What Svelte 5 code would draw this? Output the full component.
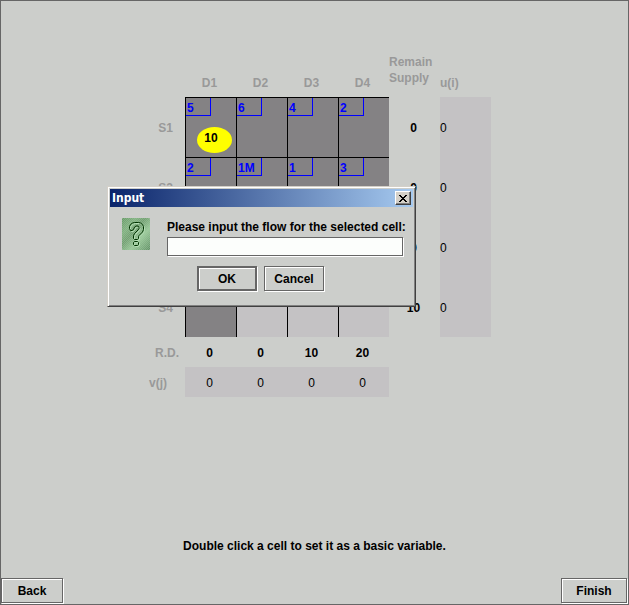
<script>
  const demands = ['D1', 'D2', 'D3', 'D4'];
  const rows = [
    { name: 'S1', costs: ['5', '6', '4', '2'], closed: [true, true, true, true], supply: 0, u: 0, flows: [10] },
    { name: 'S2', costs: ['2', '1M', '1', '3'], closed: [true, true, true, true], supply: 0, u: 0, flows: [] },
    { name: 'S3', costs: ['', '', '', ''], closed: [true, false, false, false], supply: 0, u: 0, flows: [] },
    { name: 'S4', costs: ['', '', '', ''], closed: [true, false, false, false], supply: 10, u: 0, flows: [] }
  ];
  const remaining = [0, 0, 10, 20];
  const v = [0, 0, 0, 0];
  const hook = 'M7.5 10.5v-2l1-2 2-1.500 2-.5h4l2 .5 2 1.500 1 2v3l-1 2.500-3.500 3.500-.5 1v2l-1 1h-3l-1-1v-3l1-2 3.500-3.500 1-1.500v-1l-1-1.500h-2l-1.500 1-1 2.500-1.500 1h-1.500z';
  const dot = 'M12.500 23.500h3l1 1v2l-1 1h-3l-1-1v-2z';
  let flow = $state('');
</script>

<main class="frame">
  <table class="tableau">
    <thead>
      <tr>
        <td class="side"></td>
        {#each demands as d}<th class="col">{d}</th>{/each}
        <th class="col left supply">Remain<br />Supply</th>
        <th class="col left">u(i)</th>
      </tr>
    </thead>
    <tbody>
      {#each rows as row}
        <tr class="source">
          <th class="side">{row.name}</th>
          {#each row.costs as cost, j}
            <td class="cell" class:closed={row.closed[j]}>
              {#if cost}<span class="cost">{cost}</span>{/if}
              {#if row.flows[j]}<span class="flow">{row.flows[j]}</span>{/if}
            </td>
          {/each}
          <td class="bold">{row.supply}</td>
          <td class="pale left">{row.u}</td>
        </tr>
      {/each}
      <tr class="sum">
        <th class="side rd">R.D.</th>
        {#each remaining as r}<td class="bold">{r}</td>{/each}
      </tr>
      <tr class="sum">
        <th class="side vj">v(j)</th>
        {#each v as n}<td class="pale">{n}</td>{/each}
      </tr>
    </tbody>
  </table>

  <p class="hint">Double click a cell to set it as a basic variable.</p>

  <footer>
    <button class="btn back">Back</button>
    <button class="btn finish">Finish</button>
  </footer>

  <dialog open aria-labelledby="dialog-title">
    <header>
      <span id="dialog-title">Input</span>
      <button class="close" aria-label="Close">
        <svg width="8" height="7" viewBox="0 0 8 7" shape-rendering="crispEdges">
          <path d="M0 0h2v1h1v1h2V1h1V0h2v1H7v1H6v1H5v1h1v1h1v1h1v1H6V6H5V5H3v1H2v1H0V6h1V5h1V4h1V3H2V2H1V1H0z" />
        </svg>
      </button>
    </header>
    <div class="body">
      <svg class="icon" width="28" height="32" viewBox="0 0 28 32" aria-hidden="true">
        <defs>
          <linearGradient id="green" x1="0" y1="0" x2="1" y2="1">
            <stop offset="0" stop-color="#669966" />
            <stop offset="0.25" stop-color="#83b383" />
            <stop offset="0.42" stop-color="#729f72" />
            <stop offset="0.65" stop-color="#9ccb9c" />
            <stop offset="1" stop-color="#5f8f64" />
          </linearGradient>
          <pattern id="dither" width="2" height="2" patternUnits="userSpaceOnUse">
            <path d="M0 0h1v1H0zM1 1h1v1H1z" fill="#a6c9a6" opacity="0.4" />
          </pattern>
        </defs>
        <rect width="28" height="32" rx="1" fill="url(#green)" />
        <rect width="28" height="32" rx="1" fill="url(#dither)" />
        <g fill="none" stroke-linejoin="round">
          <g stroke="#b5dfb5" transform="translate(1 1)">
            <path d={hook} />
            <path d={dot} />
          </g>
          <g stroke="#003300">
            <path d={hook} />
            <path d={dot} />
          </g>
        </g>
      </svg>
      <div class="field">
        <label for="flow">Please input the flow for the selected cell:</label>
        <input id="flow" type="text" bind:value={flow} />
      </div>
    </div>
    <div class="actions">
      <button class="btn default">OK</button>
      <button class="btn">Cancel</button>
    </div>
  </dialog>
</main>

<style>
  :global(body) {
    margin: 0;
    background: #cccecb;
  }
  .frame {
    position: relative;
    box-sizing: border-box;
    min-height: 100vh;
    border: 1px solid #666;
    display: flex;
    flex-direction: column;
    background: #cccecb;
    color: #000;
    font: 12px/16px 'Liberation Sans', Arial, sans-serif;
  }
  .tableau {
    align-self: center;
    margin-top: 52px;
    border-collapse: separate;
    border-spacing: 0;
    table-layout: fixed;
    width: 353px;
  }
  th,
  td {
    box-sizing: border-box;
    padding: 1px 2px 0 0;
    text-align: center;
  }
  th {
    color: #999;
    font-weight: bold;
  }
  thead tr {
    height: 44px;
  }
  .col {
    vertical-align: bottom;
    padding-bottom: 6px;
  }
  .left {
    padding-right: 0;
    text-align: left;
  }
  .supply {
    padding-bottom: 11px;
  }
  .side {
    width: 47px;
    text-align: right;
    padding-right: 12px;
  }
  .rd {
    padding-right: 6px;
  }
  .vj {
    padding-right: 18px;
  }
  .source {
    height: 60px;
  }
  .sum {
    height: 30px;
  }
  .bold {
    font-weight: bold;
  }
  .pale,
  .cell {
    background: #c4c2c4;
  }
  .cell {
    padding: 0;
    border: solid #000;
    border-width: 1px 0 0 1px;
    vertical-align: top;
    font-weight: bold;
  }
  .closed {
    background: #848284;
  }
  .cost {
    display: block;
    box-sizing: border-box;
    width: 25px;
    height: 18px;
    padding-left: 1px;
    border: solid #00f;
    border-width: 0 1px 1px 0;
    color: #00f;
    line-height: 20px;
    text-align: left;
    white-space: nowrap;
  }
  .flow {
    display: block;
    box-sizing: border-box;
    width: 35px;
    height: 26px;
    margin: 11px 0 0 11px;
    padding-right: 7px;
    border-radius: 50%;
    background: #ff0;
    line-height: 22px;
  }
  .hint {
    margin: auto 0 24px;
    text-align: center;
    font-weight: bold;
  }
  footer {
    display: flex;
    justify-content: space-between;
    padding: 0 1px 1px 0;
  }
  .btn {
    box-sizing: border-box;
    width: 60px;
    height: 25px;
    padding: 0;
    border: 1px solid #666;
    border-radius: 0;
    background: #cccecb;
    box-shadow: inset 1px 1px #fff, 1px 1px #fff;
    color: #000;
    font: bold 12px/16px 'Liberation Sans', Arial, sans-serif;
  }
  .back {
    width: 62px;
  }
  .finish {
    width: 66px;
  }
  .default {
    border-width: 2px;
  }
  dialog {
    position: absolute;
    left: 106px;
    top: 185px;
    box-sizing: border-box;
    width: 309px;
    margin: 0;
    padding: 1px 1px 15px;
    border: 1px solid;
    border-color: #d4d0c8 #404040 #404040 #d4d0c8;
    box-shadow: inset 1px 1px #fff, inset -1px -1px #808080;
    background: #cccecb;
    color: #000;
  }
  header {
    display: flex;
    align-items: center;
    justify-content: space-between;
    height: 18px;
    margin: 1px;
    padding: 0 2px;
    background: linear-gradient(to right, #0a246a, #a6caf0);
    color: #fff;
    font: bold 12px/16px 'DejaVu Sans Condensed', 'DejaVu Sans', sans-serif;
  }
  .close {
    box-sizing: border-box;
    width: 16px;
    height: 14px;
    display: flex;
    align-items: center;
    justify-content: center;
    padding: 0;
    border: 1px solid;
    border-color: #fff #404040 #404040 #fff;
    border-radius: 0;
    box-shadow: inset -1px -1px #808080;
    background: #d4d0c8;
  }
  .body {
    display: flex;
    gap: 17px;
    padding: 10px 11px 0 13px;
  }
  .icon {
    flex: none;
  }
  .field {
    flex: 1;
    min-width: 0;
    display: flex;
    flex-direction: column;
  }
  label {
    font-weight: bold;
    line-height: 19px;
    white-space: nowrap;
  }
  input {
    box-sizing: border-box;
    width: 100%;
    height: 19px;
    padding: 0 2px;
    border: 1px solid #666;
    border-radius: 0;
    box-shadow: 1px 1px #fff;
    background: #fcfefc;
    font: 12px 'Liberation Sans', Arial, sans-serif;
    outline: none;
  }
  .actions {
    display: flex;
    justify-content: center;
    gap: 7px;
    margin-top: 10px;
    padding-right: 2px;
  }
</style>
